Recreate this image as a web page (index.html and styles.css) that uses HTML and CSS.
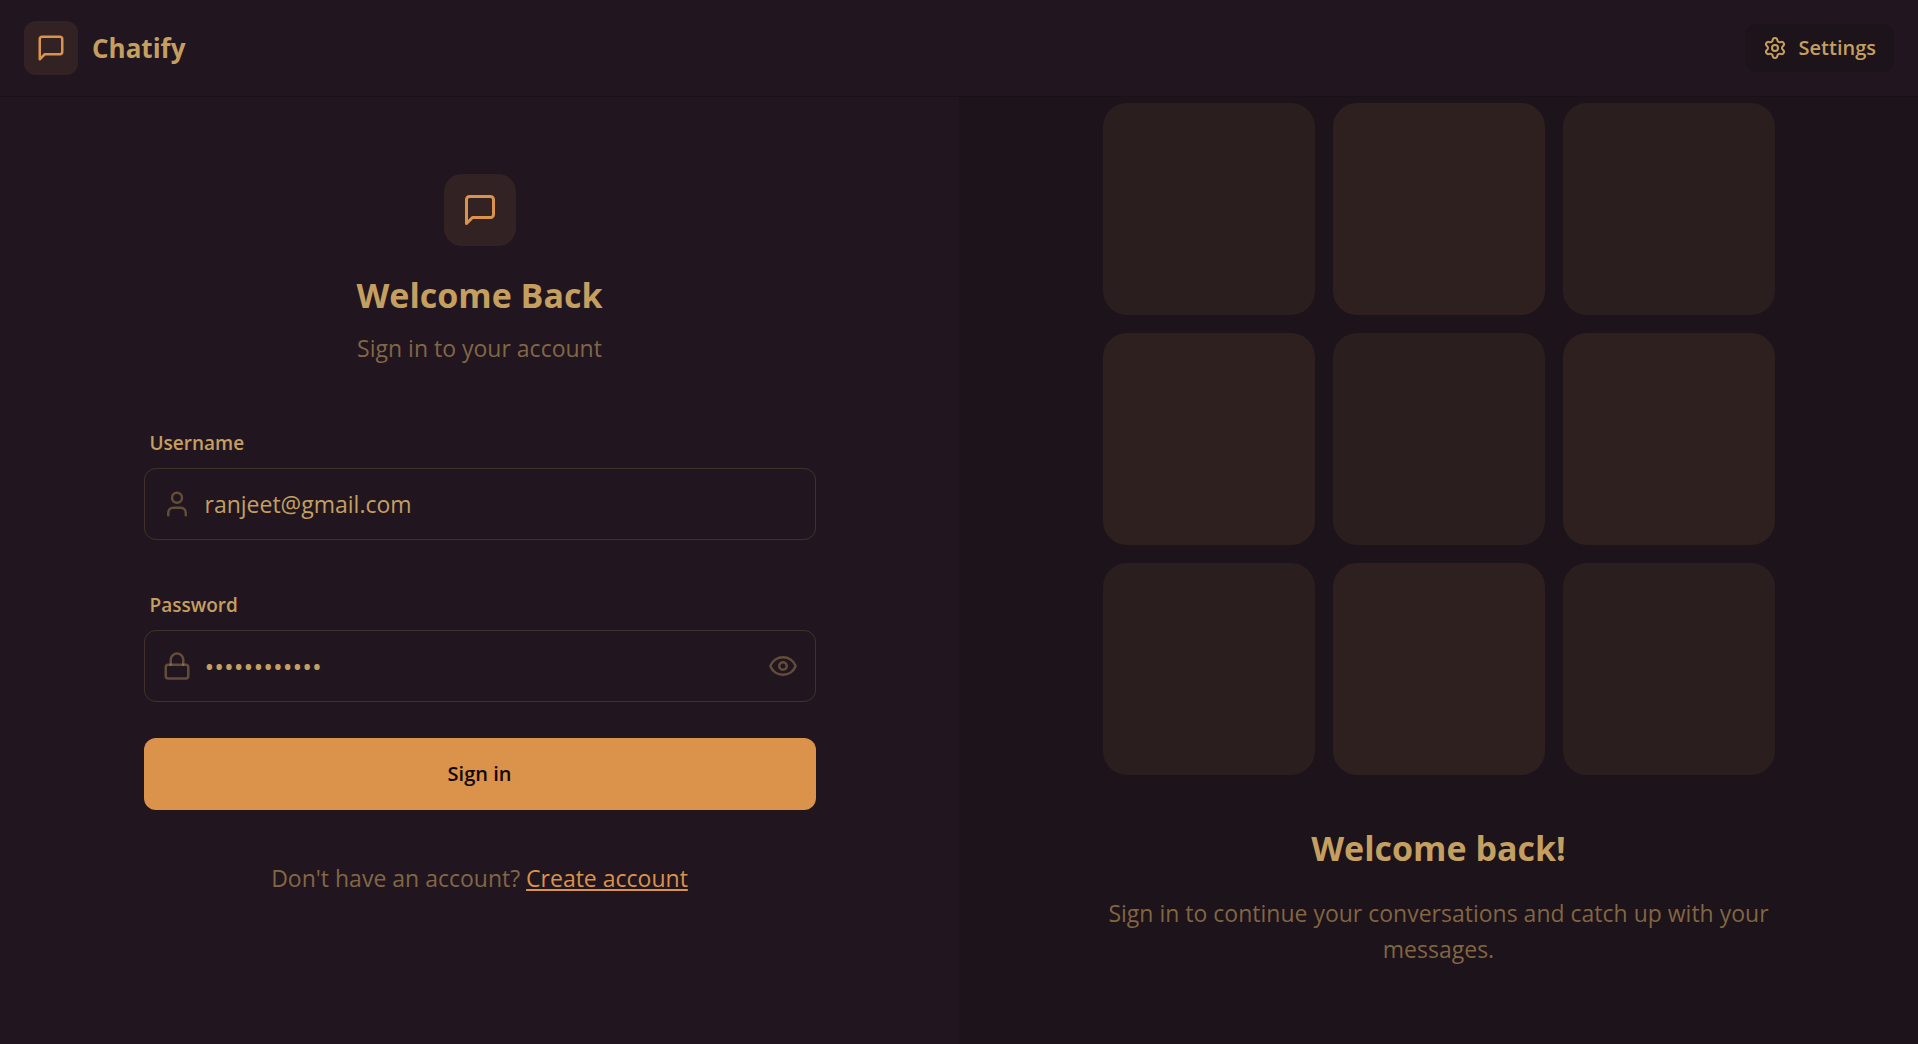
FILE: index.html
```html
<!DOCTYPE html>
<html lang="en">
<head>
  <meta charset="utf-8">
  <meta name="viewport" content="width=device-width, initial-scale=1">
  <title>Chatify</title>
  <link rel="stylesheet" href="styles.css">
</head>
<body>
  <header class="navbar">
    <a class="brand" href="#">
      <span class="brand-mark">
        <svg class="icon icon-md" viewBox="0 0 24 24" aria-hidden="true"><path d="M21 15a2 2 0 0 1-2 2H7l-4 4V5a2 2 0 0 1 2-2h14a2 2 0 0 1 2 2z"/></svg>
      </span>
      <span class="brand-name">Chatify</span>
    </a>
    <button class="settings" type="button">
      <svg class="icon icon-sm" viewBox="0 0 24 24" aria-hidden="true"><path d="M9.671 4.136a2.34 2.34 0 0 1 4.659 0 2.34 2.34 0 0 0 3.319 1.915 2.34 2.34 0 0 1 2.33 4.033 2.34 2.34 0 0 0 0 3.831 2.34 2.34 0 0 1-2.33 4.033 2.34 2.34 0 0 0-3.319 1.915 2.34 2.34 0 0 1-4.659 0 2.34 2.34 0 0 0-3.32-1.915 2.34 2.34 0 0 1-2.33-4.033 2.34 2.34 0 0 0 0-3.831A2.34 2.34 0 0 1 6.35 6.051a2.34 2.34 0 0 0 3.319-1.915"/><circle cx="12" cy="12" r="3"/></svg>
      <span>Settings</span>
    </button>
  </header>

  <main class="page">
    <section class="panel">
      <div class="content">
        <div class="intro">
          <span class="hero-mark">
            <svg class="icon icon-lg" viewBox="0 0 24 24" aria-hidden="true"><path d="M21 15a2 2 0 0 1-2 2H7l-4 4V5a2 2 0 0 1 2-2h14a2 2 0 0 1 2 2z"/></svg>
          </span>
          <h1 class="title">Welcome Back</h1>
          <p class="muted">Sign in to your account</p>
        </div>

        <form class="form">
          <div class="field">
            <label class="label" for="username">Username</label>
            <div class="control">
              <svg class="icon icon-md" viewBox="0 0 24 24" aria-hidden="true"><path d="M19 21v-2a4 4 0 0 0-4-4H9a4 4 0 0 0-4 4v2"/><circle cx="12" cy="7" r="4"/></svg>
              <input class="input" id="username" type="text" value="ranjeet@gmail.com">
            </div>
          </div>
          <div class="field">
            <label class="label" for="password">Password</label>
            <div class="control">
              <svg class="icon icon-md" viewBox="0 0 24 24" aria-hidden="true"><rect width="18" height="11" x="3" y="11" rx="2" ry="2"/><path d="M7 11V7a5 5 0 0 1 10 0v4"/></svg>
              <input class="input input-password" id="password" type="password" value="ranjeet12345">
              <button class="reveal" type="button" aria-label="Show password">
                <svg class="icon icon-md" viewBox="0 0 24 24" aria-hidden="true"><path d="M2.062 12.348a1 1 0 0 1 0-.696 10.75 10.75 0 0 1 19.876 0 1 1 0 0 1 0 .696 10.75 10.75 0 0 1-19.876 0"/><circle cx="12" cy="12" r="3"/></svg>
              </button>
            </div>
          </div>
          <button class="submit" type="submit">Sign in</button>
        </form>

        <p class="muted signup">Don't have an account? <a class="link" href="#">Create account</a></p>
      </div>
    </section>

    <section class="panel panel-dark">
      <div class="content">
        <div class="tiles" aria-hidden="true">
          <div class="tile"></div><div class="tile"></div><div class="tile"></div>
          <div class="tile"></div><div class="tile"></div><div class="tile"></div>
          <div class="tile"></div><div class="tile"></div><div class="tile"></div>
        </div>
        <h2 class="title pattern-title">Welcome back!</h2>
        <p class="muted pattern-text">Sign in to continue your conversations and catch up with your messages.</p>
      </div>
    </section>
  </main>
</body>
</html>
```
FILE: styles.css
```css
:root {
  --base: #21161f;
  --base-dark: #1d131a;
  --line: #1a1118;
  --text: #c59f60;
  --primary: #db924b;
}

*,
*::before,
*::after {
  box-sizing: border-box;
}

body {
  display: flex;
  flex-direction: column;
  min-height: 100vh;
  margin: 0;
  background: var(--base);
  color: var(--text);
  font-family: "Open Sans", "Noto Sans", sans-serif;
  font-size: 23px;
  line-height: 36px;
}

h1,
h2,
p {
  margin: 0;
}

button,
input {
  margin: 0;
  padding: 0;
  border: 0;
  background: none;
  color: inherit;
  font: inherit;
}

.icon {
  display: block;
  flex: none;
  fill: none;
  stroke: currentColor;
  stroke-width: 2;
  stroke-linecap: round;
  stroke-linejoin: round;
}

.icon-sm { width: 24px; height: 24px; }
.icon-md { width: 30px; height: 30px; }
.icon-lg { width: 36px; height: 36px; }

.navbar {
  display: flex;
  align-items: center;
  justify-content: space-between;
  padding: 21px 24px;
  border-bottom: 1px solid var(--line);
}

.brand {
  display: flex;
  align-items: center;
  gap: 14px;
  color: inherit;
  text-decoration: none;
}

.brand-mark,
.hero-mark {
  display: grid;
  place-items: center;
  background: rgb(219 146 75 / 10%);
  color: var(--primary);
}

.brand-mark {
  width: 54px;
  height: 54px;
  border-radius: 12px;
}

.brand-name {
  font-size: 26px;
  font-weight: 700;
}

.settings {
  display: flex;
  align-items: center;
  gap: 12px;
  height: 48px;
  padding: 0 18px;
  border-radius: 12px;
  background: var(--base-dark);
  font-size: 20px;
  font-weight: 600;
}

.page {
  display: grid;
  flex: 1;
  grid-template-columns: 1fr 1fr;
}

.panel {
  display: flex;
  align-items: center;
  justify-content: center;
  padding: 0 24px 72px;
}

.panel-dark {
  background: var(--base-dark);
}

.content {
  width: 100%;
  max-width: 672px;
  text-align: center;
}

.intro {
  display: flex;
  flex-direction: column;
  align-items: center;
}

.hero-mark {
  width: 72px;
  height: 72px;
  margin-bottom: 24px;
  border-radius: 18px;
}

.title {
  font-size: 34px;
  font-weight: 700;
  line-height: 50px;
}

.muted {
  color: rgb(197 159 96 / 60%);
}

.intro .muted {
  margin-top: 10px;
}

.form {
  margin-top: 62px;
}

.field {
  margin-bottom: 50px;
  text-align: left;
}

.field:last-of-type {
  margin-bottom: 36px;
}

.label {
  display: block;
  margin-bottom: 10px;
  padding: 0 6px;
  font-size: 19px;
  font-weight: 600;
  line-height: 30px;
}

.control {
  display: flex;
  align-items: center;
  gap: 13px;
  height: 72px;
  padding: 0 17px;
  border: 1px solid rgb(197 159 96 / 20%);
  border-radius: 12px;
}

.control .icon {
  stroke: rgb(197 159 96 / 40%);
}

.input {
  flex: 1;
  min-width: 0;
  height: 100%;
  outline: 0;
}

.input-password {
  font-size: 26px;
}

.submit {
  display: block;
  width: 100%;
  height: 72px;
  border-radius: 12px;
  background: var(--primary);
  color: #110802;
  font-size: 20px;
  font-weight: 600;
}

.signup {
  margin-top: 50px;
}

.link {
  color: var(--primary);
  text-decoration-thickness: 2px;
  text-underline-offset: 2px;
  text-decoration-skip-ink: none;
}

.tiles {
  display: grid;
  grid-template-columns: repeat(3, 1fr);
  gap: 18px;
}

.tile {
  aspect-ratio: 1;
  border-radius: 24px;
  background: #2a1e1f;
}

.tile:nth-child(even) {
  background: #2e201e;
}

.pattern-title {
  margin-top: 48px;
}

.pattern-text {
  margin-top: 22px;
}
```
